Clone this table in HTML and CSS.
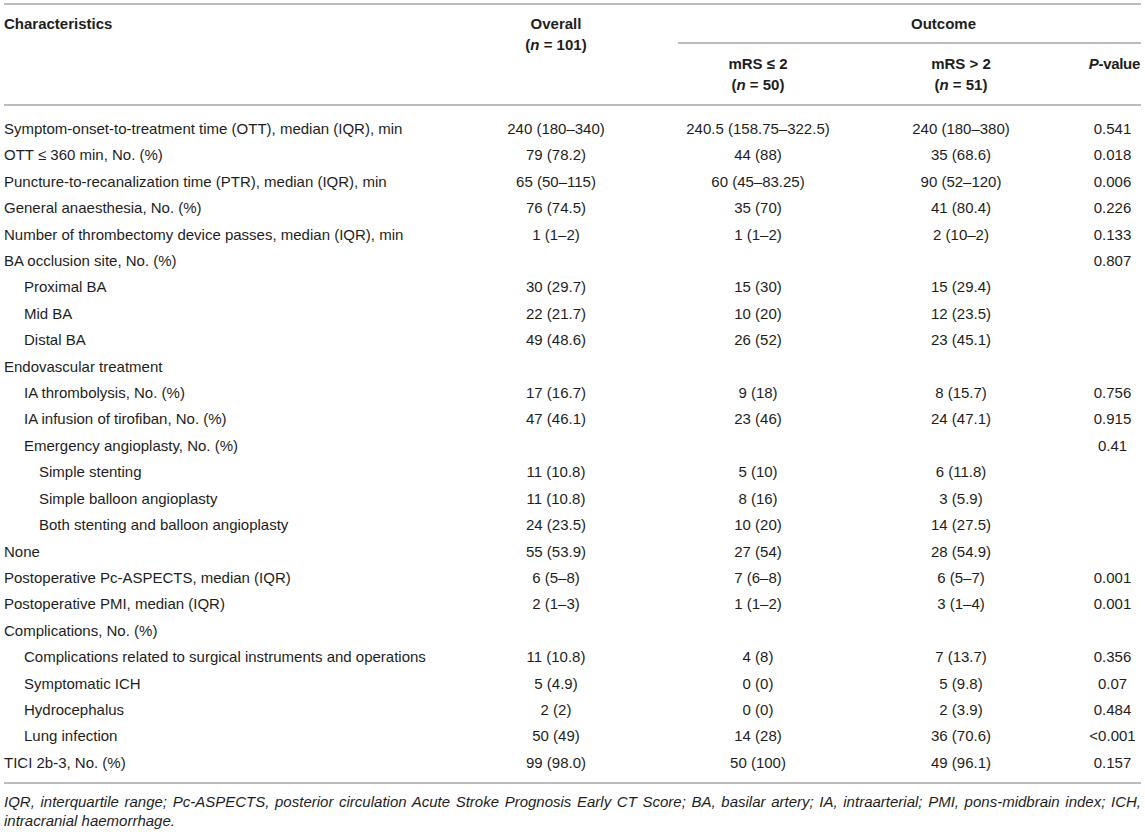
FILE: index.html
```html
<!DOCTYPE html>
<html lang="en">
<head>
<meta charset="utf-8">
<title>Table</title>
<link rel="stylesheet" href="styles.css">
</head>
<body>
<div class="page">
  <table class="data">
    <colgroup>
      <col class="c-char">
      <col class="c-all">
      <col class="c-good">
      <col class="c-bad">
      <col class="c-p">
    </colgroup>
    <thead>
      <tr class="h1">
        <th class="left" rowspan="2">Characteristics</th>
        <th rowspan="2">Overall<br>(<i>n</i> = 101)</th>
        <th class="outcome" colspan="3">Outcome</th>
      </tr>
      <tr class="h2">
        <th>mRS ≤ 2<br>(<i>n</i> = 50)</th>
        <th>mRS &gt; 2<br>(<i>n</i> = 51)</th>
        <th class="pv"><i>P</i>-value</th>
      </tr>
    </thead>
    <tbody>
      <tr class="first"><td>Symptom-onset-to-treatment time (OTT), median (IQR), min</td><td>240 (180–340)</td><td>240.5 (158.75–322.5)</td><td>240 (180–380)</td><td>0.541</td></tr>
      <tr><td>OTT ≤ 360 min, No. (%)</td><td>79 (78.2)</td><td>44 (88)</td><td>35 (68.6)</td><td>0.018</td></tr>
      <tr><td>Puncture-to-recanalization time (PTR), median (IQR), min</td><td>65 (50–115)</td><td>60 (45–83.25)</td><td>90 (52–120)</td><td>0.006</td></tr>
      <tr><td>General anaesthesia, No. (%)</td><td>76 (74.5)</td><td>35 (70)</td><td>41 (80.4)</td><td>0.226</td></tr>
      <tr><td>Number of thrombectomy device passes, median (IQR), min</td><td>1 (1–2)</td><td>1 (1–2)</td><td>2 (10–2)</td><td>0.133</td></tr>
      <tr><td>BA occlusion site, No. (%)</td><td></td><td></td><td></td><td>0.807</td></tr>
      <tr><td class="in1">Proximal BA</td><td>30 (29.7)</td><td>15 (30)</td><td>15 (29.4)</td><td></td></tr>
      <tr><td class="in1">Mid BA</td><td>22 (21.7)</td><td>10 (20)</td><td>12 (23.5)</td><td></td></tr>
      <tr><td class="in1">Distal BA</td><td>49 (48.6)</td><td>26 (52)</td><td>23 (45.1)</td><td></td></tr>
      <tr><td>Endovascular treatment</td><td></td><td></td><td></td><td></td></tr>
      <tr><td class="in1">IA thrombolysis, No. (%)</td><td>17 (16.7)</td><td>9 (18)</td><td>8 (15.7)</td><td>0.756</td></tr>
      <tr><td class="in1">IA infusion of tirofiban, No. (%)</td><td>47 (46.1)</td><td>23 (46)</td><td>24 (47.1)</td><td>0.915</td></tr>
      <tr><td class="in1">Emergency angioplasty, No. (%)</td><td></td><td></td><td></td><td>0.41</td></tr>
      <tr><td class="in2">Simple stenting</td><td>11 (10.8)</td><td>5 (10)</td><td>6 (11.8)</td><td></td></tr>
      <tr><td class="in2">Simple balloon angioplasty</td><td>11 (10.8)</td><td>8 (16)</td><td>3 (5.9)</td><td></td></tr>
      <tr><td class="in2">Both stenting and balloon angioplasty</td><td>24 (23.5)</td><td>10 (20)</td><td>14 (27.5)</td><td></td></tr>
      <tr><td>None</td><td>55 (53.9)</td><td>27 (54)</td><td>28 (54.9)</td><td></td></tr>
      <tr><td>Postoperative Pc-ASPECTS, median (IQR)</td><td>6 (5–8)</td><td>7 (6–8)</td><td>6 (5–7)</td><td>0.001</td></tr>
      <tr><td>Postoperative PMI, median (IQR)</td><td>2 (1–3)</td><td>1 (1–2)</td><td>3 (1–4)</td><td>0.001</td></tr>
      <tr><td>Complications, No. (%)</td><td></td><td></td><td></td><td></td></tr>
      <tr><td class="in1">Complications related to surgical instruments and operations</td><td>11 (10.8)</td><td>4 (8)</td><td>7 (13.7)</td><td>0.356</td></tr>
      <tr><td class="in1">Symptomatic ICH</td><td>5 (4.9)</td><td>0 (0)</td><td>5 (9.8)</td><td>0.07</td></tr>
      <tr><td class="in1">Hydrocephalus</td><td>2 (2)</td><td>0 (0)</td><td>2 (3.9)</td><td>0.484</td></tr>
      <tr><td class="in1">Lung infection</td><td>50 (49)</td><td>14 (28)</td><td>36 (70.6)</td><td>&lt;0.001</td></tr>
      <tr class="last"><td>TICI 2b-3, No. (%)</td><td>99 (98.0)</td><td>50 (100)</td><td>49 (96.1)</td><td>0.157</td></tr>
    </tbody>
  </table>
  <p class="note"><span class="note-line">IQR, interquartile range; Pc-ASPECTS, posterior circulation Acute Stroke Prognosis Early CT Score; BA, basilar artery; IA, intraarterial; PMI, pons-midbrain index; ICH,</span><span class="note-line2">intracranial haemorrhage.</span></p>
</div>
</body>
</html>
```

FILE: styles.css
```css
html, body {
  margin: 0;
  padding: 0;
  background: #ffffff;
}

.page {
  padding: 3px 4px 0 4px;
  width: 1137px;
  font-family: "Liberation Sans", Arial, sans-serif;
  color: #1e1e1e;
}

.data {
  width: 1137px;
  border-collapse: collapse;
  table-layout: fixed;
  font-size: 15px;
  border-top: 2px solid #bcbcbc;
  border-bottom: 2px solid #bcbcbc;
}

.c-char { width: 430px; }
.c-all { width: 244px; }
.c-good { width: 160px; }
.c-bad { width: 246px; }
.c-p { width: 57px; }

.data th {
  font-weight: bold;
  text-align: center;
  vertical-align: top;
  line-height: 21px;
  padding: 0;
  white-space: nowrap;
}

.data th.left {
  text-align: left;
}

.data thead {
  border-bottom: 2px solid #bcbcbc;
}

.h1 th {
  padding-top: 8px;
}

.h1 th.outcome {
  padding-left: 68px;
  padding-bottom: 8px;
  border-bottom: 2px solid #bcbcbc;
}

.h2 th {
  padding-top: 9px;
  padding-bottom: 9px;
}

.h2 th.pv {
  text-align: right;
  padding-right: 1px;
  letter-spacing: -0.3px;
}

.data td {
  padding: 3px 0;
  line-height: 20.4px;
  text-align: center;
  white-space: nowrap;
  vertical-align: middle;
}

.data td:first-child {
  text-align: left;
}

.data td.in1 {
  padding-left: 20px;
}

.data td.in2 {
  padding-left: 35px;
}

.data tr.first td {
  padding-top: 13px;
}

.data tr.last td {
  padding-bottom: 9px;
}

.note {
  margin: 8px 0 0 0;
  font-size: 15px;
  font-style: italic;
  line-height: 19px;
  color: #1e1e1e;
}

.note-line {
  display: block;
  text-align: justify;
  text-align-last: justify;
}

.note-line2 {
  display: block;
}
```
